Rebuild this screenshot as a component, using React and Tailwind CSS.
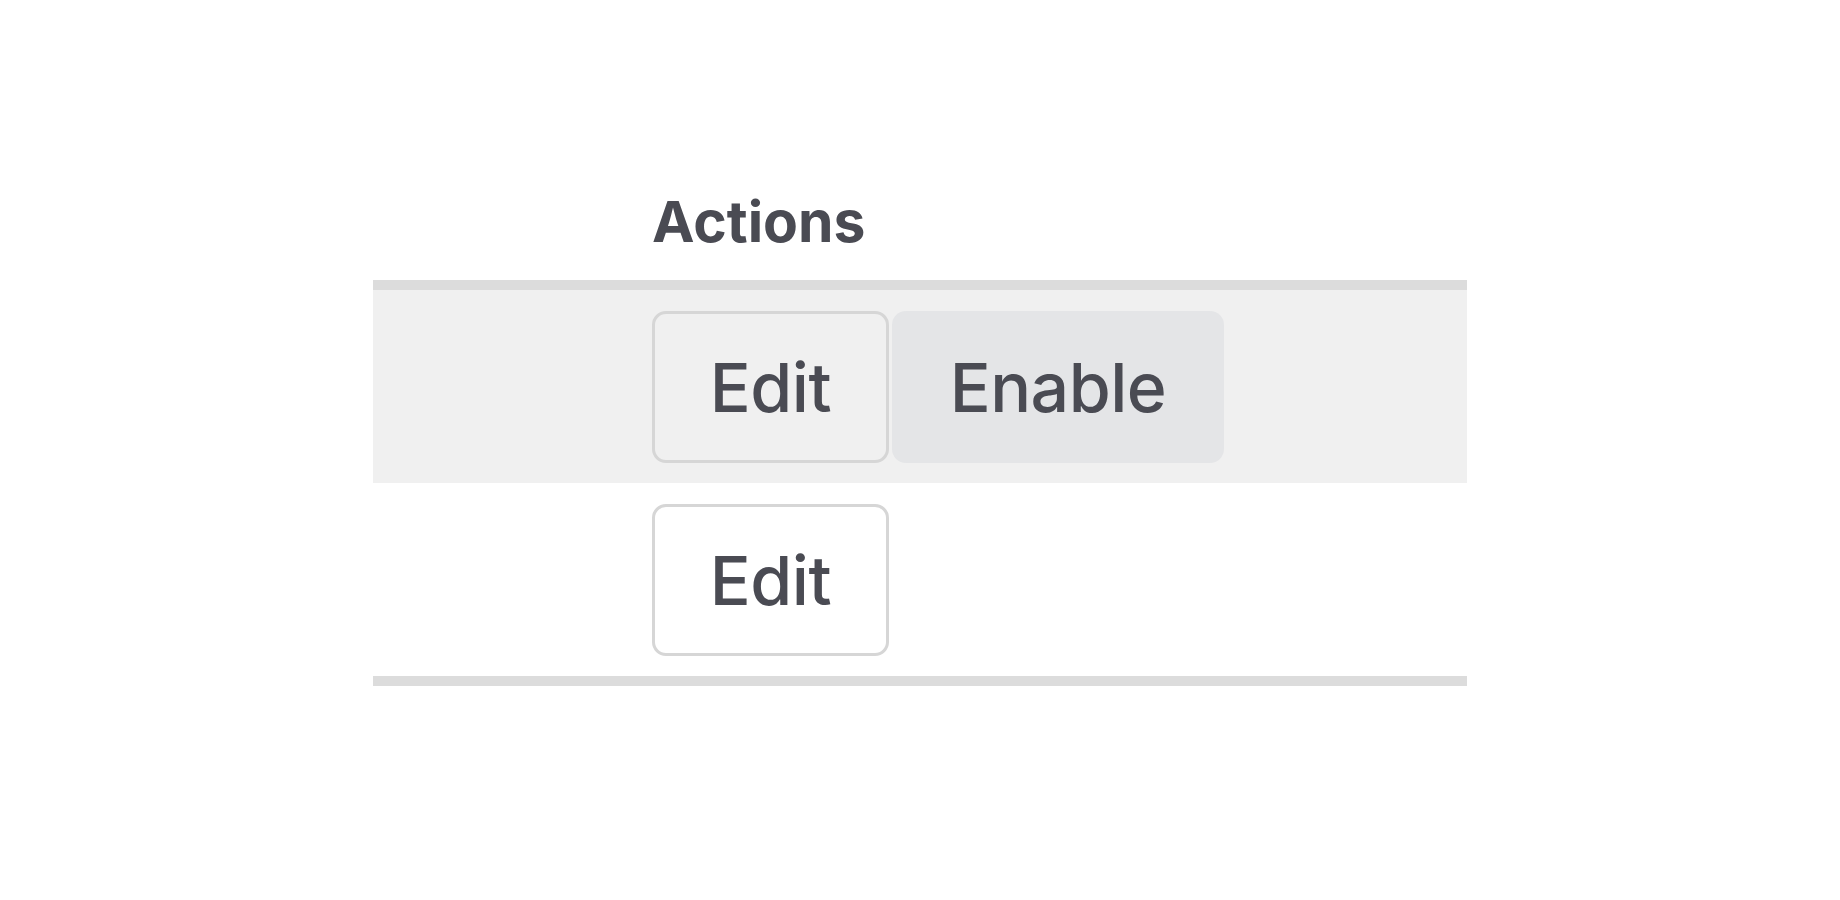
import React from 'react';

const ROWS = [
  { id: 1, disabled: true },
  { id: 2, disabled: false },
];

function ActionButton({ children, variant = 'outline', className = '' }) {
  const base =
    'h-[152px] flex items-center justify-center rounded-[14px] text-[68px] leading-none font-medium tracking-[-0.5px] text-[#4a4b53]';
  const styles =
    variant === 'outline'
      ? 'border-[3px] border-[#d6d6d6]'
      : 'bg-[#e4e5e7]';
  return <button className={`${base} ${styles} ${className}`}>{children}</button>;
}

export default function App() {
  return (
    <div className="min-h-[900px] bg-white font-['Inter','Liberation_Sans',sans-serif] pt-[193px]">
      <div className="ml-[373px] w-[1094px]">
        {/* Header */}
        <div className="grid grid-cols-[279px_1fr] pb-[30px]">
          <div />
          <div className="text-[57px] leading-none font-bold text-[#4a4b53]">Actions</div>
        </div>

        <div className="border-t-[10px] border-b-[10px] border-[#dcdcdc]">
          {ROWS.map((row, i) => (
            <div
              key={row.id}
              className={`grid grid-cols-[279px_1fr] h-[193px] items-center ${i === 0 ? 'bg-[#f0f0f0]' : 'bg-white'}`}
            >
              <div />
              <div className="flex gap-[3px]">
                <ActionButton className="w-[237px]">Edit</ActionButton>
                {row.disabled && (
                  <ActionButton variant="solid" className="w-[332px]">
                    Enable
                  </ActionButton>
                )}
              </div>
            </div>
          ))}
        </div>
      </div>
    </div>
  );
}
